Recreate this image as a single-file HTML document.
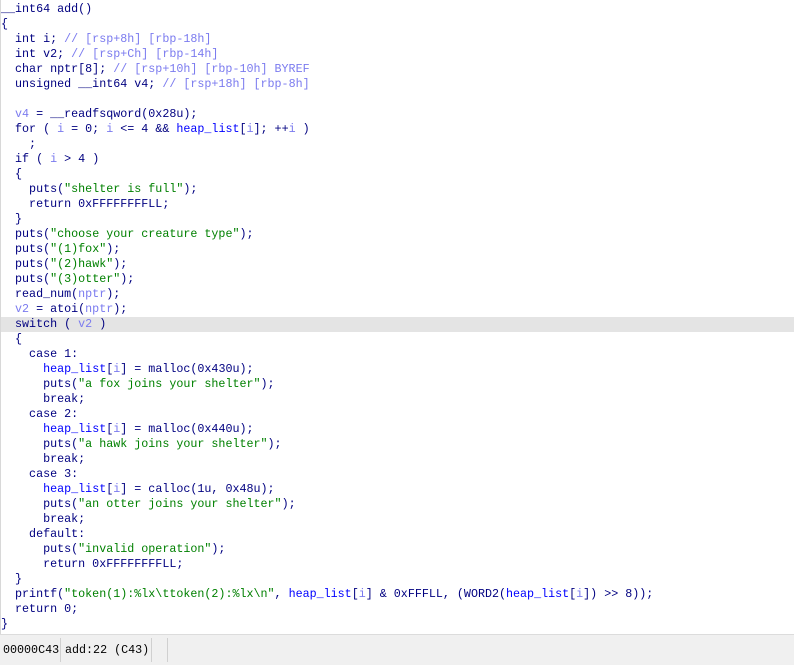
<!DOCTYPE html><html><head><style>
body{margin:0;width:794px;height:664px;background:#fff;overflow:hidden;position:relative;font-family:"Liberation Mono",monospace;}
pre{margin:0;position:absolute;left:1px;top:2px;font-family:"Liberation Mono",monospace;font-size:11.7px;line-height:15px;color:#000080;}
.v{color:#7b7bef}.s{color:#008000}.g{color:#0000ff}
.hl{position:absolute;left:0;top:317px;width:794px;height:15px;background:#e4e4e4;}
.lb{position:absolute;left:0;top:0;width:1px;height:634px;background:#d8d8d8}
.sb{position:absolute;left:0;top:634px;width:794px;height:30px;background:#f0f0f0;border-top:1px solid #dcdcdc;font-size:11.7px;color:#000;}
.sb span{position:absolute;top:8px}
.sep{position:absolute;top:3px;width:1px;height:24px;background:#d0d0d0}
</style></head><body>
<div class="hl"></div>
<div class="lb"></div>
<pre>__int64 add()
{
  int i; <span class="v">// [rsp+8h] [rbp-18h]</span>
  int v2; <span class="v">// [rsp+Ch] [rbp-14h]</span>
  char nptr[8]; <span class="v">// [rsp+10h] [rbp-10h] BYREF</span>
  unsigned __int64 v4; <span class="v">// [rsp+18h] [rbp-8h]</span>

  <span class="v">v4</span> = __readfsqword(0x28u);
  for ( <span class="v">i</span> = 0; <span class="v">i</span> &lt;= 4 &amp;&amp; <span class="g">heap_list</span>[<span class="v">i</span>]; ++<span class="v">i</span> )
    ;
  if ( <span class="v">i</span> &gt; 4 )
  {
    puts(<span class="s">"shelter is full"</span>);
    return 0xFFFFFFFFLL;
  }
  puts(<span class="s">"choose your creature type"</span>);
  puts(<span class="s">"(1)fox"</span>);
  puts(<span class="s">"(2)hawk"</span>);
  puts(<span class="s">"(3)otter"</span>);
  read_num(<span class="v">nptr</span>);
  <span class="v">v2</span> = atoi(<span class="v">nptr</span>);
  switch ( <span class="v">v2</span> )
  {
    case 1:
      <span class="g">heap_list</span>[<span class="v">i</span>] = malloc(0x430u);
      puts(<span class="s">"a fox joins your shelter"</span>);
      break;
    case 2:
      <span class="g">heap_list</span>[<span class="v">i</span>] = malloc(0x440u);
      puts(<span class="s">"a hawk joins your shelter"</span>);
      break;
    case 3:
      <span class="g">heap_list</span>[<span class="v">i</span>] = calloc(1u, 0x48u);
      puts(<span class="s">"an otter joins your shelter"</span>);
      break;
    default:
      puts(<span class="s">"invalid operation"</span>);
      return 0xFFFFFFFFLL;
  }
  printf(<span class="s">"token(1):%lx\ttoken(2):%lx\n"</span>, <span class="g">heap_list</span>[<span class="v">i</span>] &amp; 0xFFFLL, (WORD2(<span class="g">heap_list</span>[<span class="v">i</span>]) &gt;&gt; 8));
  return 0;
}</pre>
<div class="sb"><span style="left:3px">00000C43</span><div class="sep" style="left:60px"></div><span style="left:65px">add:22 (C43)</span><div class="sep" style="left:151px"></div><div class="sep" style="left:167px"></div></div>
</body></html>
